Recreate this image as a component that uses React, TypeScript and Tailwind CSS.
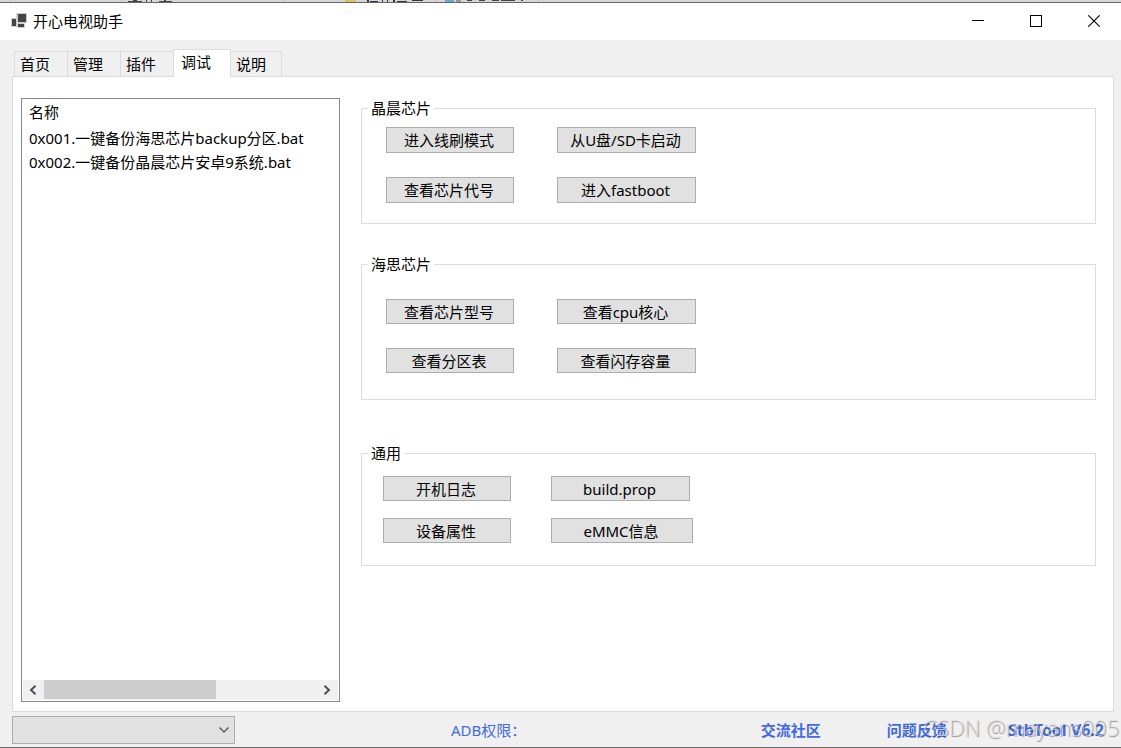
import { useState } from "react";

const TABS = ["首页", "管理", "插件", "调试", "说明"];

const SCRIPTS = [
  "0x001.一键备份海思芯片backup分区.bat",
  "0x002.一键备份晶晨芯片安卓9系统.bat",
];

type ButtonProps = {
  label: string;
  className: string;
};

const ToolButton: React.FC<ButtonProps> = ({ label, className }) => (
  <button
    className={`flex items-center justify-center border border-[#adadad] bg-[#e1e1e1] pr-0.5 text-black hover:border-[#0078d7] hover:bg-[#e5f1fb] ${className}`}
  >
    {label}
  </button>
);

type GroupProps = {
  title: string;
  className: string;
  children: React.ReactNode;
};

const Group: React.FC<GroupProps> = ({ title, className, children }) => (
  <fieldset className={`min-w-0 border border-[#dcdcdc] ${className}`}>
    <legend className="ml-1.5 px-[3px] leading-[21px]">{title}</legend>
    {children}
  </fieldset>
);

// the slice of the window behind, above our title bar
const BackStrip: React.FC = () => (
  <svg className="h-0.5 w-full shrink-0 bg-[#d6d6d6]" aria-hidden="true">
    <path d="M10 0h1v2h-1zM121 0h1v2h-1zM284 0h1v2h-1zM436 0h1v2h-1zM538 0h1v2h-1z" fill="#c4c4c4" />
    <path d="M128 1h14v1h-14zM133 0h4v1h-4zM146 0h1v2h-1zM151 0h1v2h-1zM159 1h13v1h-13zM164 0h2v1h-2z" fill="#444" />
    <path d="M345 0h11v2h-11z" fill="#dfc15f" />
    <path d="M367 0h2v2h-2zM370 1h8v1h-8zM382 0h1v2h-1zM387 0h1v2h-1zM393 0h2v2h-2zM397 1h10v1h-10zM412 0h11v1h-11z" fill="#2f3640" />
    <path d="M445 0h9v2h-9z" fill="#6ea8cf" />
    <path d="M456 0h5v2h-5z" fill="#999" />
    <path d="M467 0h5v1h-5zM479 0h6v1h-6zM492 0h7v1h-7zM501 0h14v1h-14zM521 0h2v1h-2z" fill="#444" />
  </svg>
);

const TitleBar: React.FC = () => (
  <header className="flex h-[38px] shrink-0 items-center border-t border-[#666] bg-white pb-0.5">
    <svg className="ml-[11px] mr-1.5 h-4 w-4" viewBox="0 0 16 16" aria-hidden="true">
      <path d="M5 0h11v10H5zM0 5h6v9H0zM6 10h8v5H6z" fill="#d0d0d0" />
      <path d="M7 1h8v8H7zM1 6h4v7H1zM7 11h6v3H7z" fill="#444" />
    </svg>
    <h1 className="flex-1">开心电视助手</h1>
    <div className="flex h-full">
      <button aria-label="最小化" className="flex w-[58px] items-center justify-center hover:bg-[#e5e5e5]">
        <svg width="12" height="12" viewBox="0 0 12 12" shapeRendering="crispEdges">
          <path d="M0 5h12v1H0z" />
        </svg>
      </button>
      <button aria-label="最大化" className="flex w-[58px] items-center justify-center hover:bg-[#e5e5e5]">
        <svg width="12" height="12" viewBox="0 0 12 12" shapeRendering="crispEdges">
          <path d="M.5.5h11v11H.5z" fill="none" stroke="#000" />
        </svg>
      </button>
      <button aria-label="关闭" className="flex w-14 items-center justify-center pl-0.5 hover:bg-[#e81123]">
        <svg width="12" height="12" viewBox="0 0 12 12">
          <path d="M.3.3l11.4 11.4M11.7.3L.3 11.7" fill="none" stroke="#000" strokeWidth="1.1" />
        </svg>
      </button>
    </div>
  </header>
);

const ScriptList: React.FC = () => (
  <div className="flex w-[319px] shrink-0 flex-col border border-[#828790] bg-white p-px">
    <div className="flex-1 pl-1.5">
      <h2 className="pb-px leading-[25px]">名称</h2>
      <ul>
        {SCRIPTS.map((name) => (
          <li key={name} className="whitespace-nowrap leading-6">{name}</li>
        ))}
      </ul>
    </div>
    <div className="flex h-5 items-stretch bg-[#f0f0f0]">
      <button aria-label="向左滚动" className="flex w-[21px] items-center justify-center pr-0.5 pb-px">
        <svg width="8" height="10" viewBox="0 0 8 10">
          <path d="M6.5.8L2 5l4.500 4.200" fill="none" stroke="#505050" strokeWidth="2" />
        </svg>
      </button>
      <div className="flex-1">
        <div className="h-[19px] w-[63%] bg-[#cdcdcd]" />
      </div>
      <button aria-label="向右滚动" className="flex w-[21px] items-center justify-center pr-0.5 pb-px">
        <svg width="8" height="10" viewBox="0 0 8 10">
          <path d="M1.500.8L6 5 1.500 9.200" fill="none" stroke="#505050" strokeWidth="2" />
        </svg>
      </button>
    </div>
  </div>
);

const DebugPanel: React.FC = () => (
  <main className="flex flex-1 gap-[21px] border border-[#dcdcdc] bg-white pt-[21px] pr-[17px] pb-[9px] pl-2">
    <ScriptList />
    <div className="min-w-0 flex-1">
      <Group title="晶晨芯片" className="mb-[30px] pb-5">
        <div className="grid grid-cols-[128px_139px] gap-x-[43px] gap-y-6 pt-2 pl-6">
          <ToolButton label="进入线刷模式" className="h-[26px]" />
          <ToolButton label="从U盘/SD卡启动" className="h-[26px]" />
          <ToolButton label="查看芯片代号" className="h-[26px]" />
          <ToolButton label="进入fastboot" className="h-[26px]" />
        </div>
      </Group>
      <Group title="海思芯片" className="mb-[43px] pb-[26px]">
        <div className="grid grid-cols-[128px_139px] gap-x-[43px] gap-y-6 pt-6 pl-6">
          <ToolButton label="查看芯片型号" className="h-[25px]" />
          <ToolButton label="查看cpu核心" className="h-[25px]" />
          <ToolButton label="查看分区表" className="h-[25px]" />
          <ToolButton label="查看闪存容量" className="h-[25px]" />
        </div>
      </Group>
      <Group title="通用" className="pb-[22px]">
        <div className="grid grid-cols-[128px_142px] gap-x-10 gap-y-[17px] pt-3 pl-[21px]">
          <ToolButton label="开机日志" className="h-[25px]" />
          <ToolButton label="build.prop" className="h-[25px] w-[139px]" />
          <ToolButton label="设备属性" className="h-[25px]" />
          <ToolButton label="eMMC信息" className="h-[25px]" />
        </div>
      </Group>
    </div>
  </main>
);

const StatusBar: React.FC = () => (
  <footer className="relative flex h-9 shrink-0 items-center border-b border-[#666] pl-3 pr-[17px] text-[#4169e1]">
    <div className="relative">
      <select aria-label="设备" className="block h-7 w-[223px] appearance-none border border-[#adadad] bg-[#e1e1e1]" />
      <svg className="pointer-events-none absolute top-2.5 right-1.5" width="10" height="8" viewBox="0 0 10 8">
        <path d="M.5 1.500L5 6l4.500-4.500" fill="none" stroke="#444" strokeWidth="1.100" />
      </svg>
    </div>
    <span className="ml-[216px] flex-1">ADB权限：</span>
    <nav className="flex font-bold">
      <a href="#community" className="mr-[66px]">交流社区</a>
      <a href="#feedback" className="mr-[61px]">问题反馈</a>
      <a href="#version" className="text-base leading-5">StbTool V6.2</a>
    </nav>
    <span className="pointer-events-none absolute right-0.5 bottom-1.5 font-['Open_Sans',sans-serif] text-[22px] leading-7 font-light text-[#e4e4e4]/70 [text-shadow:1px_1px_1px_#0006]">
      CSDN @mayans005
    </span>
  </footer>
);

export default function App() {
  const [active, setActive] = useState("调试");

  return (
    <div className="flex min-h-screen flex-col bg-[#f0f0f0] font-['Noto_Sans','Noto_Sans_CJK_SC',sans-serif] text-[15px] leading-5 text-black">
      <BackStrip />
      <TitleBar />
      <div className="flex flex-1 flex-col pt-[9px] pr-[7px] pl-3">
        <div role="tablist" className="-mb-px flex items-end pl-0.5">
          {TABS.map((tab) => (
            <button
              key={tab}
              role="tab"
              aria-selected={tab === active}
              onClick={() => setActive(tab)}
              className={
                tab === active
                  ? "relative -ml-px h-7 w-[58px] border border-b-0 border-[#dcdcdc] bg-white pb-1 pl-[7px] text-left"
                  : "-ml-px h-[26px] w-[54px] border border-[#dcdcdc] bg-[#f0f0f0] pl-[5px] text-left first:ml-0 last:w-[52px]"
              }
            >
              {tab}
            </button>
          ))}
        </div>
        <DebugPanel />
      </div>
      <StatusBar />
    </div>
  );
}
